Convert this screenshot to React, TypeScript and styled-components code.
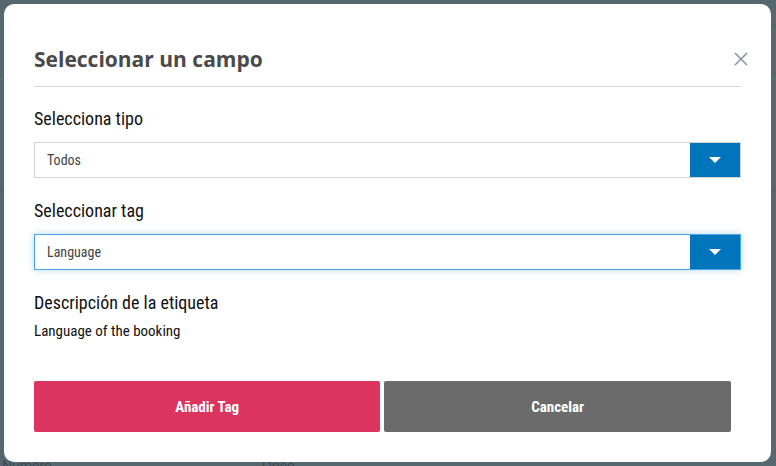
import React from 'react';
import styled, { createGlobalStyle } from 'styled-components';

const GlobalStyle = createGlobalStyle`
  * { box-sizing: border-box; }
  html, body { margin: 0; padding: 0; }
  body {
    width: 776px;
    height: 466px;
    overflow: hidden;
    background: #56676f;
    font-family: Roboto, "Liberation Sans", sans-serif;
  }
`;

const Page = styled.div`
  position: relative;
  width: 776px;
  height: 466px;
  background: #56676f;
  padding: 4px 5px 4px 4px;
`;

const Backdrop = styled.div`
  position: absolute;
  inset: 0;
  pointer-events: none;
`;

const BackLine = styled.div<{ $top: number; $color: string }>`
  position: absolute;
  left: 0;
  right: 0;
  top: ${p => p.$top}px;
  height: 1px;
  background: ${p => p.$color};
`;

const BackText = styled.span<{ $top: number; $left: number }>`
  position: absolute;
  top: ${p => p.$top}px;
  left: ${p => p.$left}px;
  font-size: 14px;
  line-height: 16px;
  color: #3c4a52;
`;

const Modal = styled.div`
  position: relative;
  background: #fff;
  border-radius: 10px;
  width: 767px;
  height: 458px;
  padding: 43px 30px 0 30px;
`;

const Header = styled.div`
  display: flex;
  align-items: center;
  justify-content: space-between;
  padding-bottom: 15px;
  border-bottom: 1px solid #d6d6d6;
`;

const Title = styled.h2`
  margin: 0;
  font-family: "Open Sans", "Liberation Sans", sans-serif;
  font-weight: 700;
  font-size: 21px;
  line-height: 24px;
  color: #4a4a4a;
`;

const CloseButton = styled.button`
  border: none;
  background: none;
  padding: 0;
  width: 16px;
  height: 16px;
  margin-right: -8px;
  display: flex;
  align-items: center;
  justify-content: center;
  cursor: pointer;
`;

const Body = styled.div`
  padding-top: 21px;
`;

const Label = styled.div`
  font-size: 18px;
  font-weight: 450;
  font-stretch: 82%;
  line-height: 22px;
  color: #111;
  margin-bottom: 12px;
`;

const Field = styled.div`
  margin-bottom: 22px;
`;

const Select = styled.div<{ $focused?: boolean }>`
  display: flex;
  height: 36px;
  border: 1px solid ${p => (p.$focused ? '#4aa6e6' : '#d4d4d4')};
  box-shadow: ${p => (p.$focused ? '0 0 6px rgba(74, 166, 230, 0.45)' : 'none')};
`;

const SelectValue = styled.div`
  flex: 1;
  display: flex;
  align-items: center;
  padding-left: 12px;
  font-size: 14px;
  font-stretch: 84%;
  color: #444;
`;

const SelectArrow = styled.div`
  width: 50px;
  background: #0075bc;
  display: flex;
  align-items: center;
  justify-content: center;
`;

const Caret = styled.span`
  width: 0;
  height: 0;
  border-left: 6px solid transparent;
  border-right: 6px solid transparent;
  border-top: 6px solid #fff;
`;

const Description = styled.div`
  font-size: 15px;
  font-weight: 450;
  font-stretch: 80%;
  color: #111;
  margin-top: -4px;
`;

const Actions = styled.div`
  display: flex;
  gap: 4px;
  margin-top: 41px;
`;

const ActionButton = styled.button<{ $variant: 'primary' | 'secondary' }>`
  width: 49%;
  height: 51px;
  border: none;
  border-radius: 2px;
  background: ${p => (p.$variant === 'primary' ? '#db345e' : '#6b6b6b')};
  color: #fff;
  font-family: Roboto, "Liberation Sans", sans-serif;
  font-size: 15px;
  font-weight: 700;
  font-stretch: 80%;
  cursor: pointer;
`;

const App = () => (
  <>
    <GlobalStyle />
    <Page>
      <Backdrop>
        <BackLine $top={30} $color="#4c7a72" />
        <BackLine $top={79} $color="#4c7a72" />
        <BackLine $top={190} $color="#4e5d65" />
        <BackText $top={458} $left={2}>Número</BackText>
        <BackText $top={458} $left={262}>Orico</BackText>
      </Backdrop>
      <Modal>
        <Header>
          <Title>Seleccionar un campo</Title>
          <CloseButton aria-label="Cerrar">
            <svg width="14" height="14" viewBox="0 0 14 14">
              <path d="M1 1L13 13M13 1L1 13" stroke="#8a93a0" strokeWidth="1.6" />
            </svg>
          </CloseButton>
        </Header>
        <Body>
          <Field>
            <Label>Selecciona tipo</Label>
            <Select>
              <SelectValue>Todos</SelectValue>
              <SelectArrow><Caret /></SelectArrow>
            </Select>
          </Field>
          <Field>
            <Label>Seleccionar tag</Label>
            <Select $focused>
              <SelectValue>Language</SelectValue>
              <SelectArrow><Caret /></SelectArrow>
            </Select>
          </Field>
          <Label>Descripción de la etiqueta</Label>
          <Description>Language of the booking</Description>
          <Actions>
            <ActionButton $variant="primary">Añadir Tag</ActionButton>
            <ActionButton $variant="secondary">Cancelar</ActionButton>
          </Actions>
        </Body>
      </Modal>
    </Page>
  </>
);

export default App;
